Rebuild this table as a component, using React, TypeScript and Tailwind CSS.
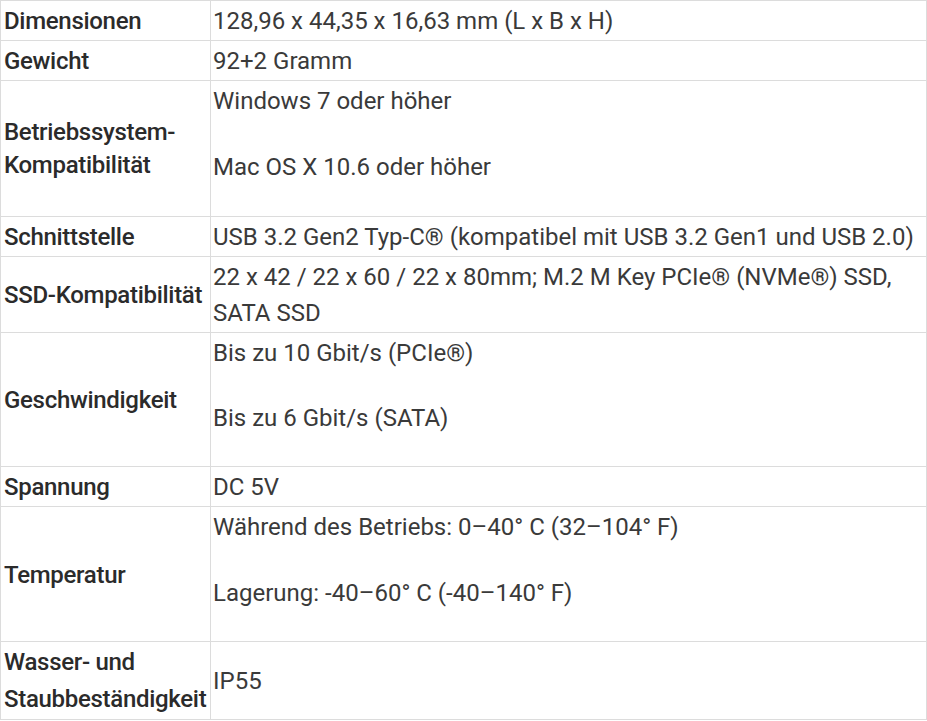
type Spec = {
  label: string[];
  values: string[];
  labelLeading?: string;
  gap?: string;
};

const specs: Spec[] = [
  { label: ["Dimensionen"], values: ["128,96 x 44,35 x 16,63 mm (L x B x H)"] },
  { label: ["Gewicht"], values: ["92+2 Gramm"] },
  {
    label: ["Betriebssystem-", "Kompatibilität"],
    values: ["Windows 7 oder höher", "Mac OS X 10.6 oder höher"],
    labelLeading: "leading-[33px]",
  },
  {
    label: ["Schnittstelle"],
    values: ["USB 3.2 Gen2 Typ-C® (kompatibel mit USB 3.2 Gen1 und USB 2.0)"],
  },
  {
    label: ["SSD-Kompatibilität"],
    values: ["22 x 42 / 22 x 60 / 22 x 80mm; M.2 M Key PCIe® (NVMe®) SSD, SATA SSD"],
  },
  {
    label: ["Geschwindigkeit"],
    values: ["Bis zu 10 Gbit/s (PCIe®)", "Bis zu 6 Gbit/s (SATA)"],
    gap: "mb-[29px]",
  },
  { label: ["Spannung"], values: ["DC 5V"] },
  {
    label: ["Temperatur"],
    values: ["Während des Betriebs: 0–40° C (32–104° F)", "Lagerung: -40–60° C (-40–140° F)"],
    gap: "mb-[29.5px]",
  },
  {
    label: ["Wasser- und", "Staubbeständigkeit"],
    values: ["IP55"],
    labelLeading: "leading-[37px]",
  },
];

export default function App() {
  return (
    <div className="bg-white w-[927px] font-['Roboto',sans-serif] text-[#333]">
      <table className="w-full border-collapse border border-[#dcdcdc] text-[24px]">
        <tbody>
          {specs.map((row) => (
            <tr key={row.label.join(" ")}>
              <td
                className={`w-[210px] border border-[#dcdcdc] pl-[3px] pr-0 pt-[2px] pb-[1px] align-middle font-medium tracking-[-0.3px] text-[#2b2b2b] ${
                  row.labelLeading ?? "leading-[36px]"
                }`}
              >
                {row.label.map((l) => (
                  <div key={l} className="whitespace-nowrap">
                    {l}
                  </div>
                ))}
              </td>
              <td className="border border-[#dcdcdc] pl-[2px] pr-1 pt-[2px] pb-[1px] align-middle leading-[36px] text-[#3a3a3a]">
                {row.values.length > 1 ? (
                  row.values.map((v) => (
                    <p key={v} className={row.gap ?? "mb-[30px]"}>
                      {v}
                    </p>
                  ))
                ) : (
                  <p>{row.values[0]}</p>
                )}
              </td>
            </tr>
          ))}
        </tbody>
      </table>
    </div>
  );
}
